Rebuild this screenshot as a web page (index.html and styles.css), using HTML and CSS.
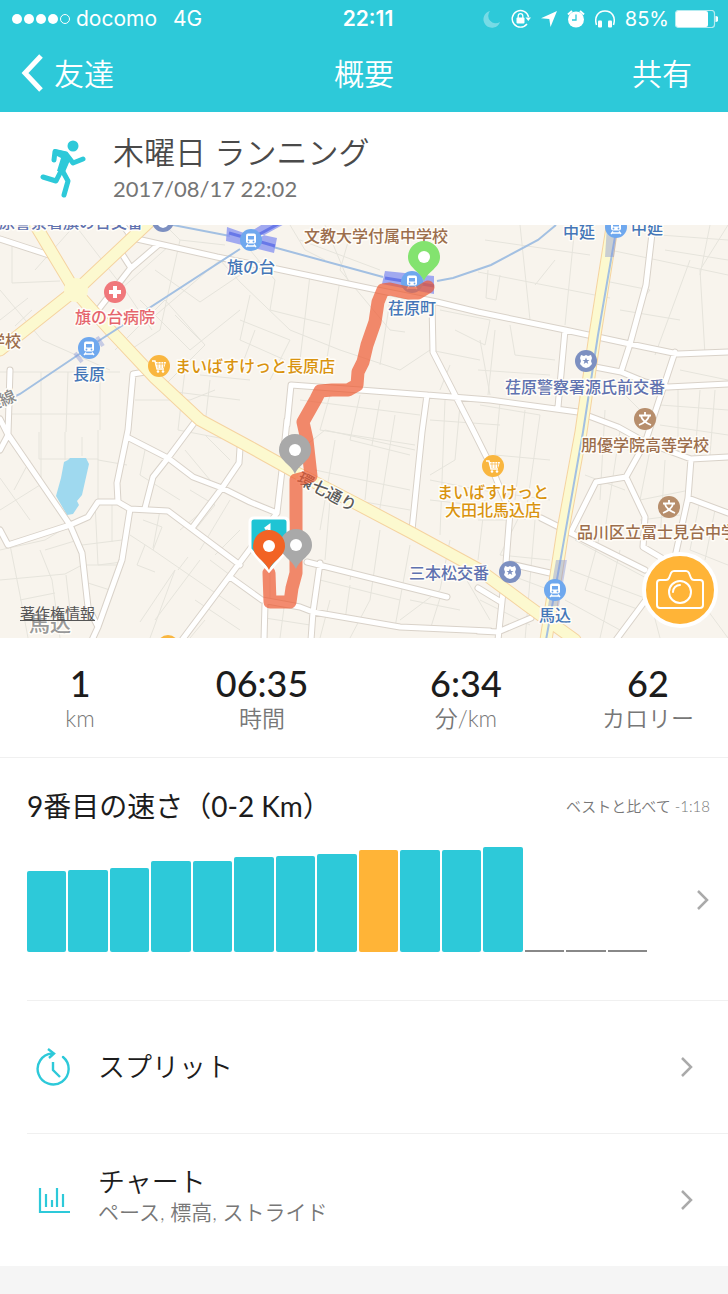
FILE: index.html
```html
<!DOCTYPE html>
<html lang="ja">
<head>
    <meta charset="UTF-8">
    <meta name="viewport" content="width=device-width, initial-scale=1.0">
    <title>概要</title>
    <link rel="stylesheet" href="styles.css">
</head>
<body>
    <header class="header">
        <div class="status">
            <div class="status-left">
                <span class="dots"><i></i><i></i><i></i><i></i><i class="empty"></i></span>
                <span class="carrier">docomo</span>
                <span>4G</span>
            </div>
            <div class="status-time">22:11</div>
            <div class="status-right">
                <svg class="moon" width="18" height="18" viewBox="0 0 18 18"><path d="M7 1A8.500 8.500 0 1 0 17 12A7.500 7.500 0 0 1 7 1Z" fill="#fff"/></svg>
                <svg class="lock" width="20" height="20" viewBox="0 0 20 20">
                    <path d="M16 15A8.300 8.300 0 1 1 17.600 8" fill="none" stroke="#fff" stroke-width="1.400"/>
                    <path d="M14.500 8.500h5.500l-2.700 3.500z" fill="#fff"/>
                    <rect x="5.500" y="8.500" width="8" height="6" rx="1" fill="#fff"/>
                    <path d="M7.200 9V7a2.300 2.300 0 0 1 4.600 0v2" fill="none" stroke="#fff" stroke-width="1.300"/>
                </svg>
                <svg class="arrow" width="16" height="16" viewBox="0 0 16 16"><path d="M16 0L9.500 16L8.300 8L0 7.200Z" fill="#fff"/></svg>
                <svg class="alarm" width="18" height="18" viewBox="0 0 18 18">
                    <circle cx="9" cy="9.500" r="8" fill="#fff"/>
                    <path d="M1 4.500L5 1M17 4.500L13 1" stroke="#fff" stroke-width="2"/>
                    <path d="M9 4.500V10H5" fill="none" stroke="#2dc9d9" stroke-width="1.300"/>
                </svg>
                <svg class="phones" width="20" height="18" viewBox="0 0 20 18">
                    <path d="M1.500 15C-1 7 3 1 10 1S21 7 18.500 15" fill="none" stroke="#fff" stroke-width="1.500"/>
                    <rect x="3" y="10.500" width="4" height="7" rx="1" fill="#fff"/>
                    <rect x="13" y="10.500" width="4" height="7" rx="1" fill="#fff"/>
                </svg>
                <span class="percent">85%</span>
                <svg width="43" height="18" viewBox="0 0 43 18">
                    <rect x=".500" y=".500" width="39" height="17" rx="3" fill="none" stroke="#b5ebf0" stroke-width="1.200"/>
                    <rect x="1" y="1" width="32" height="16" rx="2" fill="#fff"/>
                    <path d="M40.500 6a3 3 0 0 1 0 6z" fill="#fff"/>
                </svg>
            </div>
        </div>
        <nav class="nav">
            <button class="back">
                <svg width="23" height="38" viewBox="0 0 23 38"><path d="M20 2L4 19L20 36" fill="none" stroke="#fff" stroke-width="5"/></svg>
                友達
            </button>
            <h1>概要</h1>
            <button class="share">共有</button>
        </nav>
    </header>

    <section class="activity">
        <svg class="runner" width="46" height="60" viewBox="0 0 46 60">
            <circle cx="33" cy="7" r="5.500" fill="#2dc9d9"/>
            <path d="M14 10L27 13L31 19L25 33L17 32L21 19L15 16Z" fill="#2dc9d9"/>
            <g fill="none" stroke="#2dc9d9" stroke-width="5" stroke-linecap="round" stroke-linejoin="round">
                <path d="M14 21L15 12.500L26 15L33 24L43 20"/>
                <path d="M22 30L16 42L3 38"/>
                <path d="M22 31L28 42L24 56"/>
            </g>
        </svg>
        <div>
            <h2>木曜日 ランニング</h2>
            <p>2017/08/17 22:02</p>
        </div>
    </section>

    <section class="map">
        <svg class="map-canvas" viewBox="0 225 728 413">
            <defs>
                <g id="train">
                    <circle r="11" fill="#6fa8ee"/>
                    <rect x="-5" y="-6.500" width="10" height="10" rx="2" fill="#fff"/>
                    <rect x="-3" y="-4" width="6" height="3.500" fill="#6fa8ee"/>
                    <path d="M-3 4.500L-5 7M3 4.500L5 7M-4 6H4" stroke="#fff" stroke-width="1.300"/>
                    <circle cx="-2.500" cy="1.500" r=".9" fill="#6fa8ee"/>
                    <circle cx="2.500" cy="1.500" r=".9" fill="#6fa8ee"/>
                </g>
                <g id="cart">
                    <circle r="11" fill="#f9b63f"/>
                    <path d="M-7 -5h3l2 8h7" fill="none" stroke="#fff" stroke-width="1.400"/>
                    <path d="M-4 -4H7L5 2H-2.500Z" fill="#fff"/>
                    <path d="M-3 -2H6M-1 -4V2M2 -4V2M4.500 -4V2" stroke="#f9b63f" stroke-width=".7"/>
                    <circle cx="-1" cy="5.500" r="1.300" fill="#fff"/>
                    <circle cx="4" cy="5.500" r="1.300" fill="#fff"/>
                </g>
                <g id="police">
                    <circle r="11" fill="#7d90c1"/>
                    <path d="M-5 -6L-2 -5L0 -6L2 -5L5 -6L6 -3L5 0L6 3L3 6L0 7L-3 6L-6 3L-5 0L-6 -3Z" fill="#fff"/>
                    <path d="M0 -3.500L1 -1H3.500L1.500 .5L2.300 3L0 1.600L-2.300 3L-1.500 .5L-3.500 -1H-1Z" fill="#7d90c1"/>
                </g>
                <g id="school">
                    <circle r="11" fill="#b78e6c"/>
                    <path d="M0 -7V-4M-6 -3.500H6M-4 -3C-3 1 1 4 6 6M4 -3C3 1 -1 4 -6 6" fill="none" stroke="#fff" stroke-width="1.800"/>
                </g>
                <g id="pin">
                    <path d="M0 24C-4 14 -16 11 -16 0A16 16 0 0 1 16 0C16 11 4 14 0 24Z"/>
                    <circle r="6" fill="#fff"/>
                </g>
                <!-- streets are drawn twice: casing, then surface -->
                <path id="streets" d="M0 239L49 255M123 225L130 235L137 239L217 257L277 269L377 290L437 302L478 312L565 330L630 344L678 354L728 352M158 245L130 269L98 310M122 254L131 268M10 370L8 434M0 419L7 433L70 525L82 553L88 607L98 627M0 450L8 435M0 530L8 545L70 525L88 517L98 502H118L130 509L168 511L240 565M145 372L133 374L128 430L117 483L118 502M130 509L122 560L98 627L92 640M127 437L168 458L193 477L222 488L250 502L277 513M197 419L168 458L153 477L145 508M240 448L239 463L222 488L192 528M287 420L282 470L277 513L250 549L182 640M230 577L262 600L300 607L313 612L400 627L490 631M287 425L291 385L360 390L427 395L490 400L578 412L618 427L645 442L691 459L728 457M432 302L433 352L473 430L490 464L510 512L506 563L498 640M427 395L422 432L412 530M653 225L646 285L630 344L621 372M565 330L558 407M595 367L621 372L645 382L668 387L728 384M675 352L645 443L626 477L596 482L571 532M626 477L645 517L643 547L665 560M691 459L688 498L675 557M688 498L728 513M541 518L571 533L645 570M506 563L550 573M648 597L616 640M478 588L501 602M478 631L498 632L531 618M307 562L447 597M320 563L313 612L311 640M265 604L264 640"/>
                <path id="avenues" d="M33 221L75 291L110 330L155 378L200 420L250 447L295 472L355 503L410 532L478 569L528 606L575 640M0 350L68 296L80 287L149 222"/>
                <path id="route15" d="M613 221L595 335L581 432L563 530L546 640"/>
            </defs>

            <rect y="225" width="728" height="413" fill="#f8f4ed"/>

            <path class="alleys" d="M12 240V283L60 281M0 290L42 340L110 370M0 320L28 298M15 326L32 310M35 270L75 225M75 225L125 290L152 330M120 290L170 245M155 270L200 302L240 275M165 225L180 240L225 245M180 240L160 330L130 350M150 320L220 260L240 282M115 350L165 300L205 345L160 390M175 315L200 340M140 300L190 350L240 310M0 372H120M41 372V480M68 372L66 432M100 375V430M12 414H100M135 400H190L215 390M185 370L178 430L230 440M200 375L250 380M160 390L240 400M210 380L205 425"/>
            <path class="alleys" d="M240 282L290 330L340 350L400 370M250 250L275 280L270 310L330 325M310 275L300 360M340 280L325 370M240 320L290 340L270 380M250 295L240 340L285 360M255 330L242 365M350 235L340 270L390 330L405 332M390 300L380 365M290 225L305 250L325 260M325 225L350 285M300 240L380 270M440 310L490 320L485 345L455 330M400 370L430 350L480 360M450 365L440 390M300 400L420 415M330 395L320 430L415 445M360 395L350 440L410 455M380 400L372 445M300 450L325 430L415 450M315 470L410 490M335 440L320 530M370 450L365 500M395 415L378 520M325 495L410 510"/>
            <path class="alleys" d="M445 400L440 535M430 420L500 425M460 405L455 460L430 475M480 405L540 415M500 402L495 455L550 460M525 410L515 500M540 415L525 520M430 480L480 490L550 500M430 500L475 505M480 340L490 395M495 330L488 395M478 370L550 375M510 325L515 355L555 360M478 272L610 298M485 240L590 255M520 225L530 320M575 225L565 325M555 260L535 285M488 270L486 298L496 300L500 275M610 250L728 275M600 280L650 290L642 300M620 310L680 320M690 260L655 355M728 225L700 270L705 355M660 235L728 240M665 250L728 260M710 225L700 275M605 410L600 500M620 430L605 530M590 445L630 450M585 475L625 490M615 385L640 410M680 370L728 380M678 390V455M700 390L695 455M660 425L728 435M715 390L710 455M660 405L728 410"/>
            <path class="alleys" d="M650 450L640 500L690 490M665 460L660 540M640 520L680 515M700 500L690 550L728 565M715 510L705 560M575 540L650 580M590 500L570 530M600 535L585 590L640 610M620 550L600 638M570 570L650 600M565 600L620 630M520 515L500 555L550 560M535 520L525 640M478 520H510M485 500L478 560M510 575L550 590M480 600L530 625M450 540L440 590L400 620M410 545L395 627M360 520L350 580M380 530L370 600L350 638M330 500L325 560M320 580L400 600M330 600L320 638M350 585L345 620M410 600L460 610M440 598L430 630M455 560L490 620M700 600L728 638M650 600L660 638"/>
            <path class="alleys" d="M39 432V459H98V500M65 432V460M82 437V456M98 430V460L127 465M0 478L30 520M30 460L14 490M0 510L40 485M70 525L45 540L0 550M95 502L98 565L122 562M112 502V542M82 545L122 540M45 550L78 540M10 545L20 595L28 638M0 580L65 574L82 565M40 550L52 580L60 638M20 600L55 593M66 575L70 610M85 565H122M88 583L110 590M130 535L153 550L240 610M145 545L137 565L155 572M175 570L140 622M188 557L178 570M175 570L150 638M200 560L155 620M143 520L162 527L153 550M160 510L153 548M145 450L140 475L180 500M185 450L210 480M205 435L230 460M190 490L215 505L195 530M210 505L180 530M230 500L200 550M240 530L215 555M195 600L240 630M205 620L190 638M210 560L230 575M270 550V600M285 600L280 638M265 618L310 625"/>

            <path d="M68 460L70 458H86L89 464L82 495L77 501L79 505L73 514L67 515L56 496L61 478L64 462Z" fill="#9fd9ef"/>

            <g class="street-casing"><use href="#streets"/></g>
            <g class="street"><use href="#streets"/></g>
            <g class="avenue-casing"><use href="#route15"/><use href="#avenues"/></g>
            <g class="avenue"><use href="#route15"/><use href="#avenues"/></g>
            <circle cx="76" cy="290" r="12" fill="#fcf9cf"/>

            <path class="rail" d="M0 404L20 394L78 355L100 340L240 249M173 225L230 236M273 247L383 277M437 281L453 278L491 265L538 240L556 225M617 225L598 335L583 432L561 557L546 640"/>
            <g fill="#8b96f0" opacity=".8">
                <path d="M227 227L244 233L250 243L288 222H266L250 232L277 238L274 253L226 241Z"/>
                <path d="M385 271L434 276V294L382 284Z"/>
            </g>
            <path d="M229 233L275 246M256 236L280 223M385 278L434 286" stroke="#6878e8" stroke-width="3"/>
            <g fill="#7c8fd8" opacity=".4">
                <path d="M607 225H618L614 257H605Z"/>
                <path d="M556 560H567L559 606H548Z"/>
                <path d="M75 353l7 9M97 337l6 9" stroke="#7c8fd8" stroke-width="4"/>
            </g>

            <use href="#train" x="251" y="240"/>
            <use href="#train" x="89" y="348"/>
            <use href="#train" x="412" y="282"/>
            <use href="#train" x="616" y="227"/>
            <use href="#train" x="555" y="590"/>
            <use href="#cart" x="159" y="366"/>
            <use href="#cart" x="493" y="466"/>
            <use href="#cart" x="168" y="646"/>
            <use href="#police" x="163" y="221"/>
            <use href="#police" x="586" y="361"/>
            <use href="#police" x="510" y="572"/>
            <use href="#school" x="645" y="419"/>
            <use href="#school" x="669" y="507"/>
            <circle cx="115" cy="292" r="11" fill="#f0787b"/>
            <path d="M115 286v12M109 292h12" stroke="#fff" stroke-width="4"/>

            <g class="labels">
                <text class="police" x="-1" y="228">原警察署旗の台交番</text>
                <text class="station" x="251" y="273" text-anchor="middle">旗の台</text>
                <text class="school" x="376" y="242" text-anchor="middle">文教大学付属中学校</text>
                <text class="station" x="579" y="238" text-anchor="middle">中延</text>
                <text class="station" x="647" y="234" text-anchor="middle">中延</text>
                <text class="hospital" x="115" y="323" text-anchor="middle">旗の台病院</text>
                <text class="school" x="-11" y="347">学校</text>
                <text class="station" x="89" y="380" text-anchor="middle">長原</text>
                <text class="road" transform="translate(-12 413) rotate(-24)">上線</text>
                <text class="shop" x="175" y="372">まいばすけっと長原店</text>
                <text class="station" x="412" y="314" text-anchor="middle">荏原町</text>
                <text class="police" x="585" y="393" text-anchor="middle">荏原警察署源氏前交番</text>
                <text class="school" x="645" y="451" text-anchor="middle">朋優学院高等学校</text>
                <text class="school" x="577" y="538">品川区立冨士見台中学校</text>
                <text class="shop" x="493" y="498" text-anchor="middle">まいばすけっと</text>
                <text class="shop" x="493" y="516" text-anchor="middle">大田北馬込店</text>
                <text class="police" x="409" y="579">三本松交番</text>
                <text class="station" x="555" y="621" text-anchor="middle">馬込</text>
                <text class="road dark" transform="translate(296 482) rotate(28)">環七通り</text>
                <text class="area" x="29" y="631">馬込</text>
            </g>

            <path class="track" d="M428 287L418 293H408L390 289L383 290L378 302L375 322L367 345L363 362L358 372L357 385L348 390H332L320 391L316 399L303 422L307 440L311 476L296 480V573L292 588L290 602H270L269 573"/>

            <use href="#pin" x="424" y="257" fill="#83e36f"/>
            <use href="#pin" x="295" y="450" fill="#a9a9a9"/>
            <path d="M254 518H284Q288 518 288 522V549L269 571L250 549V522Q250 518 254 518Z" fill="#1fc4d4" stroke="#fff" stroke-width="3"/>
            <path d="M265 529l4-3v12" fill="none" stroke="#fff" stroke-width="3"/>
            <use href="#pin" x="296" y="545" fill="#a9a9a9"/>
            <use href="#pin" x="269" y="546" fill="#f26324"/>
        </svg>
        <a class="legal" href="#">著作権情報</a>
        <button class="camera" aria-label="写真">
            <svg width="48" height="40" viewBox="0 0 48 40" fill="none" stroke="#fff" stroke-width="2" stroke-linejoin="round">
                <path d="M4 10H10Q12 10 13 8L15 3Q16 1 18 1H30Q32 1 33 3L35 8Q36 10 38 10H44Q47 10 47 13V35Q47 38 44 38H4Q1 38 1 35V13Q1 10 4 10Z"/>
                <circle cx="24" cy="22" r="11"/>
                <path d="M17 22A7 7 0 0 1 24 15" stroke-linecap="round"/>
            </svg>
        </button>
    </section>

    <section class="stats">
        <div><strong>1</strong><span>km</span></div>
        <div><strong>06:35</strong><span>時間</span></div>
        <div><strong>6:34</strong><span>分/km</span></div>
        <div><strong>62</strong><span>カロリー</span></div>
    </section>

    <section class="speed">
        <div class="speed-head">
            <h3>9番目の速さ（0-2 Km）</h3>
            <span>ベストと比べて -1:18</span>
        </div>
        <div class="speed-body">
            <div class="bars">
                <div class="bar" style="height: 81px"></div>
                <div class="bar" style="height: 82px"></div>
                <div class="bar" style="height: 84px"></div>
                <div class="bar" style="height: 91px"></div>
                <div class="bar" style="height: 91px"></div>
                <div class="bar" style="height: 95px"></div>
                <div class="bar" style="height: 96px"></div>
                <div class="bar" style="height: 98px"></div>
                <div class="bar current" style="height: 102px"></div>
                <div class="bar" style="height: 102px"></div>
                <div class="bar" style="height: 102px"></div>
                <div class="bar" style="height: 105px"></div>
                <div class="bar none"></div>
                <div class="bar none"></div>
                <div class="bar none"></div>
            </div>
            <svg class="chevron" width="14" height="22" viewBox="0 0 14 22"><path d="M2 2L11 11L2 20"/></svg>
        </div>
    </section>

    <a class="row" href="#">
        <svg class="row-icon" width="36" height="38" viewBox="0 0 36 38">
            <path d="M28 9A15.500 15.500 0 1 1 17 5.500" fill="none" stroke="#2dc9d9" stroke-width="2.400" stroke-linecap="round"/>
            <path d="M13 1L19 5.500L14 10M18 14V22L25 29" fill="none" stroke="#2dc9d9" stroke-width="2.400"/>
        </svg>
        <span class="row-text"><b>スプリット</b></span>
        <svg class="chevron" width="14" height="22" viewBox="0 0 14 22"><path d="M2 2L11 11L2 20"/></svg>
    </a>
    <a class="row" href="#">
        <svg class="row-icon" width="36" height="38" viewBox="0 0 36 38">
            <path d="M5 7V31H35M11 13V26M17 19V26M22 7V26M28 13V26" fill="none" stroke="#2dc9d9" stroke-width="2.200"/>
        </svg>
        <span class="row-text"><b>チャート</b><small>ペース, 標高, ストライド</small></span>
        <svg class="chevron" width="14" height="22" viewBox="0 0 14 22"><path d="M2 2L11 11L2 20"/></svg>
    </a>
</body>
</html>
```
FILE: styles.css
```css
* {
box-sizing: border-box;
margin: 0;
padding: 0;
}

body {
background: #f5f5f5;
font-family: Lato, "Noto Sans CJK JP", sans-serif;
color: #1c1c1c;
}

button {
background: none;
border: none;
color: white;
font: inherit;
cursor: pointer;
}

a {
color: inherit;
text-decoration: none;
}

svg {
display: block;
flex: none;
}

/* header */
.header {
background: #2dc9d9;
color: white;
}

.status {
display: grid;
grid-template-columns: 1fr auto 1fr;
align-items: center;
height: 37px;
padding: 0 10px;
font-family: Inter, sans-serif;
font-size: 21px;
line-height: 24px;
}

.status-left, .status-right, .dots {
display: flex;
align-items: center;
}

.status-left {
padding-left: 2px;
}

.status-right {
justify-content: flex-end;
gap: 10px;
}

.status-time {
padding-left: 8px;
font-weight: 600;
}

.dots {
gap: 2px;
margin-right: 6px;
}

.dots i {
width: 10px;
height: 10px;
border-radius: 50%;
background: white;
}

.dots .empty {
background: none;
border: 1px solid white;
}

.carrier {
margin-right: 16px;
}

.moon {
opacity: 0.35;
}

.percent {
margin-right: -4px;
font-size: 20px;
}

.nav {
display: grid;
grid-template-columns: 1fr auto 1fr;
align-items: center;
height: 75px;
padding: 0 36px 4px;
font-size: 30px;
line-height: 40px;
font-weight: 350;
}

.nav h1 {
font: inherit;
}

.back {
display: flex;
align-items: center;
gap: 10px;
margin-left: -15px;
}

.share {
justify-self: end;
}

/* activity title */
.activity {
display: flex;
align-items: center;
gap: 27px;
height: 113px;
padding-left: 40px;
background: white;
}

.activity h2 {
font-size: 31px;
line-height: 42px;
font-weight: 350;
color: #4a4a4a;
}

.activity p {
font-size: 22px;
line-height: 32px;
padding-bottom: 2px;
color: #757575;
}

/* map */
.map {
position: relative;
overflow: hidden;
}

.map-canvas {
width: 100%;
height: auto;
}

.alleys {
fill: none;
stroke: #e6e4dc;
stroke-width: 1;
}

.street-casing, .street, .avenue-casing, .avenue {
fill: none;
stroke-linejoin: round;
stroke-linecap: round;
}

.street-casing {
stroke: #d9d2c9;
stroke-width: 7;
}

.street {
stroke: white;
stroke-width: 5;
}

.avenue-casing {
stroke: #f5d3a0;
stroke-width: 13;
}

.avenue {
stroke: #fcf9cf;
stroke-width: 11;
}

.rail {
fill: none;
stroke: #a3c0e2;
stroke-width: 2;
}

.track {
fill: none;
stroke: #ee5a32;
stroke-width: 13;
stroke-linejoin: round;
stroke-linecap: round;
opacity: 0.7;
}

.labels {
font-family: "Noto Sans CJK JP", sans-serif;
font-size: 16px;
font-weight: 500;
stroke: #fffdf8;
stroke-width: 3;
stroke-linejoin: round;
paint-order: stroke;
}

.labels .station {
fill: #4577b8;
}

.labels .police {
fill: #5f72b0;
}

.labels .school {
fill: #9c6e4c;
}

.labels .shop {
fill: #d9930f;
}

.labels .hospital {
fill: #e5656d;
}

.labels .road {
fill: #8a8a8a;
}

.labels .dark {
fill: #5a5a5a;
}

.labels .area {
fill: #999;
font-size: 21px;
}

.legal {
position: absolute;
left: 20px;
bottom: 15px;
font-size: 15px;
line-height: 20px;
color: #555;
text-decoration: underline;
}

.camera {
position: absolute;
right: 10px;
bottom: 10px;
width: 76px;
height: 76px;
display: flex;
align-items: center;
justify-content: center;
background: #ffb437;
border: 4px solid white;
border-radius: 50%;
}

/* totals */
.stats {
display: grid;
grid-template-columns: 11fr 14fr 14fr 11fr;
align-items: center;
height: 120px;
background: white;
border-bottom: 1px solid #f0f0f0;
text-align: center;
}

.stats strong, .stats span {
display: block;
}

.stats strong {
font-size: 36px;
line-height: 40px;
font-weight: 500;
}

.stats span {
font-size: 23px;
line-height: 30px;
font-weight: 350;
color: #777;
}

/* speed chart */
.speed {
height: 242px;
padding: 28px 18px 0 27px;
background: white;
}

.speed-head, .speed-body {
display: flex;
align-items: center;
justify-content: space-between;
}

.speed-head h3 {
font-size: 28px;
line-height: 40px;
font-weight: 400;
}

.speed-head span {
font-size: 15px;
line-height: 24px;
font-weight: 350;
color: #777;
}

.speed-body {
margin-top: 21px;
}

.bars {
display: flex;
align-items: flex-end;
gap: 2px;
flex: 1;
height: 105px;
margin-right: 49px;
}

.bar {
flex: 1;
background: #2dc9d9;
border-radius: 2px;
}

.current {
background: #ffb437;
}

.none {
height: 2px;
background: #888;
border-radius: 0;
}

.chevron {
fill: none;
stroke: #aaa;
stroke-width: 2.5;
}

/* links */
.row {
display: flex;
align-items: center;
height: 133px;
padding: 0 34px 0 35px;
background: linear-gradient(#f0f0f0, #f0f0f0) 27px 0 / 100% 1px no-repeat white;
}

.row-text {
flex: 1;
margin-left: 27px;
}

.row-text b, .row-text small {
display: block;
}

.row-text b {
font-size: 27px;
line-height: 32px;
font-weight: 350;
}

.row-text small {
margin-bottom: 8px;
font-size: 21px;
line-height: 28px;
font-weight: 350;
color: #777;
}
```
